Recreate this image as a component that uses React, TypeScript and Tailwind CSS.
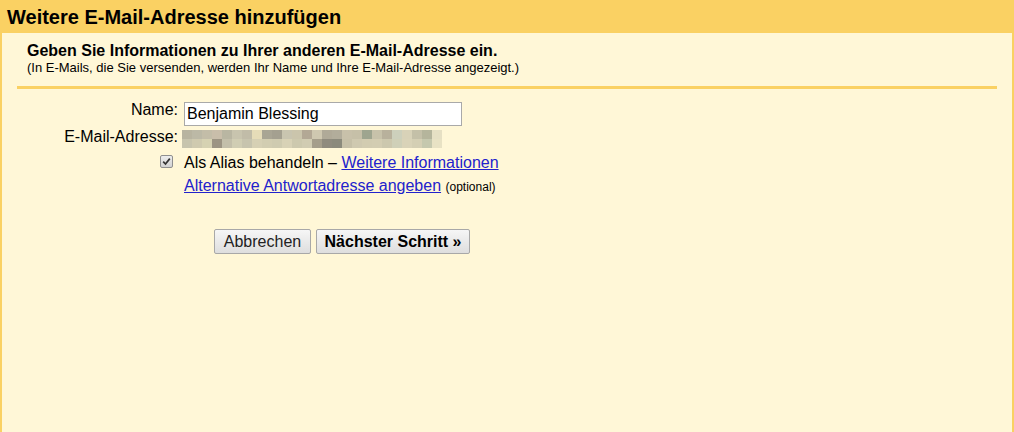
import React from "react";

const top = ["b8b4a0","bcb9a6","c3bda8","c9beaa","b9b6a2","c8c4ae","c1bca8","e6dcb8","a9a594","a4a090","c9c5b0","cbc5ac","b3a895","cfc8b0","b0aa98","b2ad9b","c8c1aa","c6c0a8","9ea58f","c7c2aa","b8b19c","cdd0bc","d8d2b8","c4c0a8","b5b59c","e6e0c4"];
const bot = ["c7c4ad","cfcaaf","d6d2b2","9c9483","c3bfaa","d0cdb3","c7c4ae","d6d0b4","d2cdb1","cfcbb0","d8d2b6","cdc9ae","d1ccb2","a59e8b","8f8b7e","8b8a7c","c6c0a8","cfc9b0","d2ccb1","d3cdb2","ccc8ae","cfd0b8","d9d3b8","d4cfb4","c5c8ae","e8e2c4"];

function Pixelated() {
  return (
    <div className="flex flex-col">
      {[top, bot].map((row, i) => (
        <div key={i} className="flex">
          {row.map((c, j) => (
            <div key={j} className="w-[10px] h-[9px]" style={{ backgroundColor: "#" + c }} />
          ))}
        </div>
      ))}
    </div>
  );
}

export default function App() {
  return (
    <div className="w-[1014px] h-[432px] flex flex-col bg-[#fff7d7] text-black font-['Liberation_Sans',Arial,sans-serif] overflow-hidden">
      <div className="h-[33px] shrink-0 bg-[#fad163] pl-[7px] flex items-center">
        <h1 className="text-[20px] font-bold leading-[23px] pt-[1px]">Weitere E-Mail-Adresse hinzufügen</h1>
      </div>
      <div className="flex-1 border-l-2 border-r-2 border-[#fad163] flex flex-col">
        <div className="pl-[25px] pt-[9px]">
          <div className="text-[16px] font-bold leading-[18px]">Geben Sie Informationen zu Ihrer anderen E-Mail-Adresse ein.</div>
          <div className="text-[13px] leading-[15px]">(In E-Mails, die Sie versenden, werden Ihr Name und Ihre E-Mail-Adresse angezeigt.)</div>
        </div>
        <div className="ml-[15px] mr-[15px] mt-[11px] h-[3px] bg-[#fad163]" />
        <div className="mt-[13px] flex flex-col text-[16px] leading-[18px]">
          <div className="flex items-start h-[24px]">
            <div className="w-[176px] text-right -mt-[1px]">Name:</div>
            <input
              readOnly
              value="Benjamin Blessing"
              className="ml-[6px] w-[278px] h-[24px] bg-white border border-[#a9a9a9] px-[2px] text-[16px] outline-none font-['Liberation_Sans',Arial,sans-serif]"
            />
          </div>
          <div className="flex items-start h-[26px]">
            <div className="w-[176px] text-right mt-[2px]">E-Mail-Adresse:</div>
            <div className="ml-[4px] mt-[4px]"><Pixelated /></div>
          </div>
          <div className="flex items-start h-[24px]">
            <div className="w-[176px] flex justify-end pr-[5px] mt-[3px]">
              <div className="w-[13px] h-[13px] rounded-[2px] border border-[#8f8f8f] bg-gradient-to-b from-[#ededed] to-[#d2d2d2] flex items-center justify-center">
                <svg width="9" height="9" viewBox="0 0 9 9">
                  <path d="M1.2 4.6 L3.5 7 L7.8 1.6" fill="none" stroke="#333" strokeWidth="1.7" />
                </svg>
              </div>
            </div>
            <div className="ml-[6px] mt-[2px]">
              Als Alias behandeln – <a className="text-[#2222cc] underline">Weitere Informationen</a>
            </div>
          </div>
          <div className="flex items-start h-[24px]">
            <div className="w-[176px]" />
            <div className="ml-[6px] mt-[1px]">
              <a className="text-[#2222cc] underline">Alternative Antwortadresse angeben</a>{" "}
              <span className="text-[12px]">(optional)</span>
            </div>
          </div>
          <div className="flex mt-[29px] ml-[212px] gap-[5px]">
            <button className="h-[25px] w-[97px] border border-[#a8a8a8] rounded-[2px] bg-gradient-to-b from-[#f6f6f6] to-[#dedede] text-[16px] text-[#222]">Abbrechen</button>
            <button className="h-[25px] w-[154px] border border-[#a8a8a8] rounded-[2px] bg-gradient-to-b from-[#f6f6f6] to-[#dedede] text-[16px] font-bold">Nächster Schritt »</button>
          </div>
        </div>
      </div>
    </div>
  );
}
